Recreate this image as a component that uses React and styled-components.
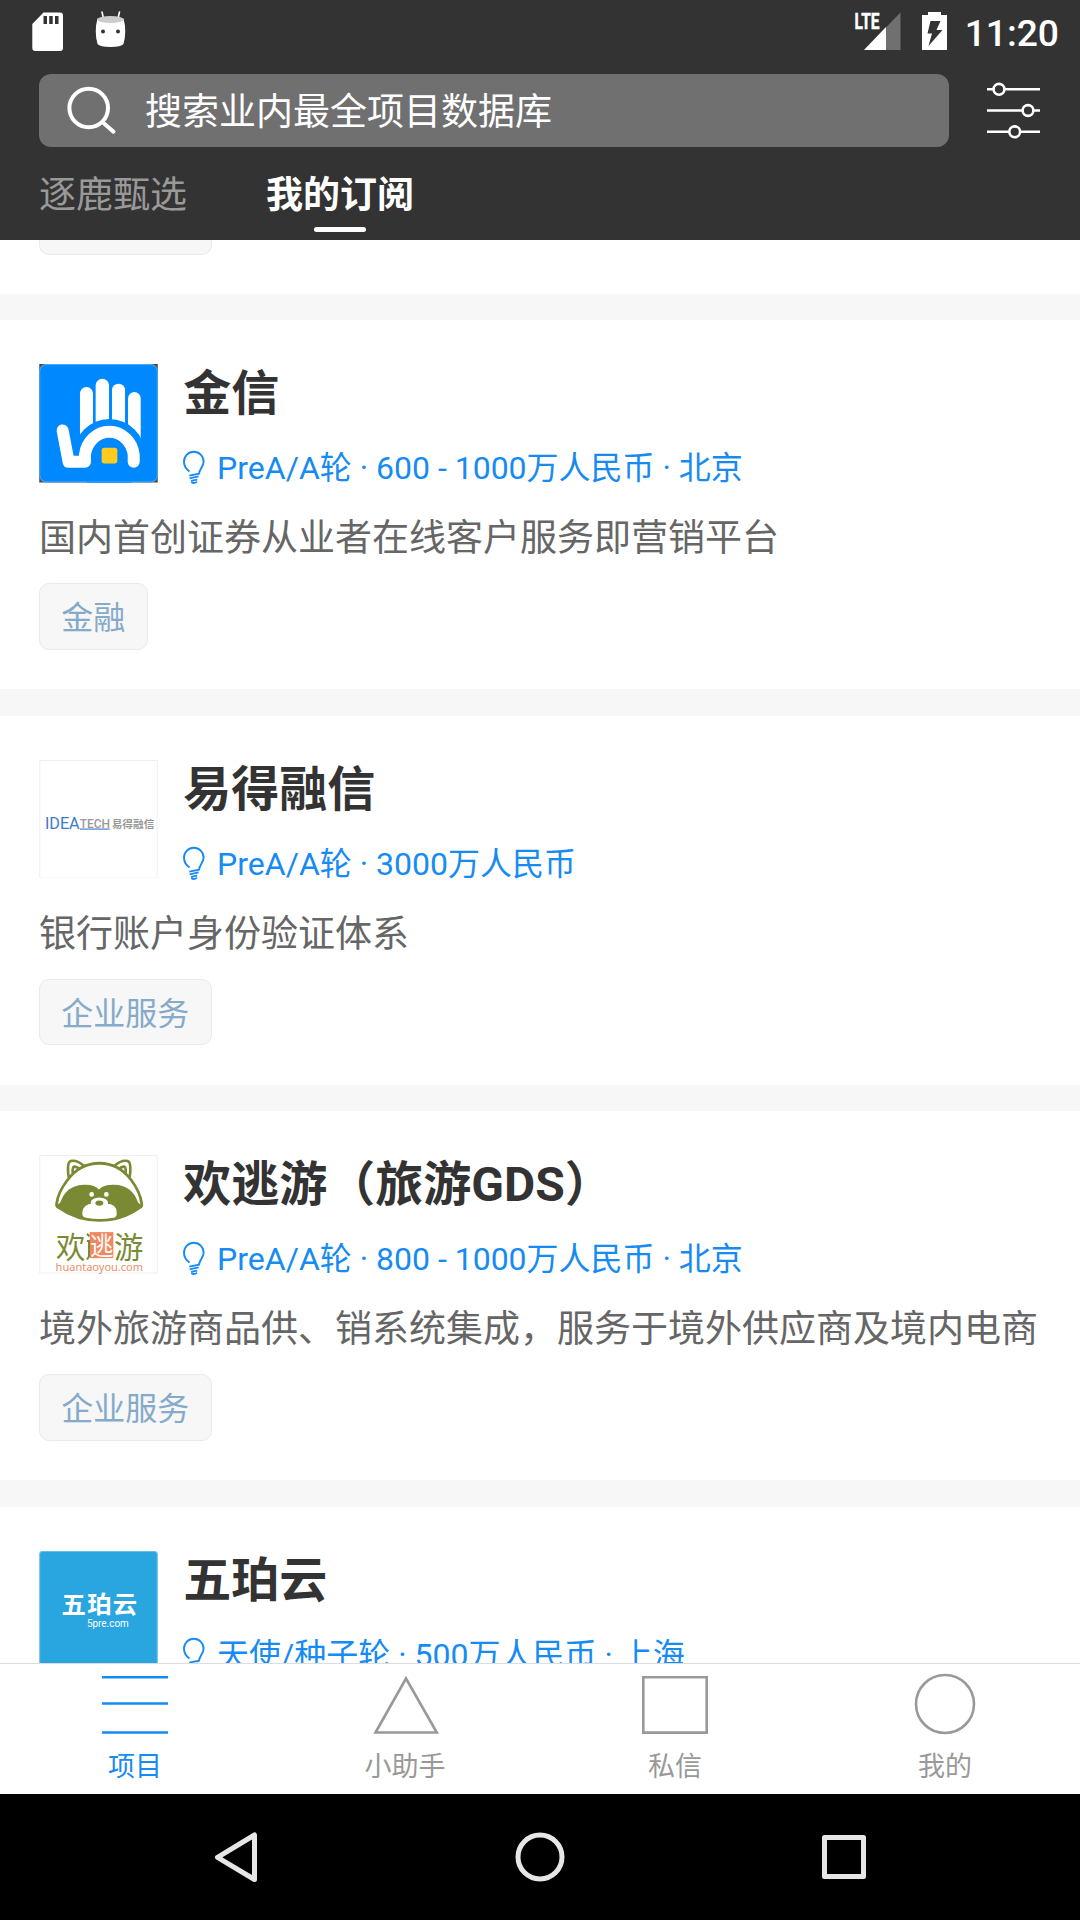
import React from "react";
import styled, { createGlobalStyle } from "styled-components";

const Global = createGlobalStyle`
  * { box-sizing: border-box; }
  body { margin: 0; background: #fff; }
  svg { display: block; flex: none; overflow: visible; }
`;

const Screen = styled.div`
  width: 1080px;
  height: 1920px;
  display: flex;
  flex-direction: column;
  overflow: hidden;
  background: #fff;
  font-family: Roboto, "Noto Sans CJK SC", sans-serif;
`;

const Header = styled.header`
  height: 240px;
  flex: none;
  background: #333;
  color: #fff;
`;

const StatusBar = styled.div`
  height: 73.5px;
  padding: 12px 21px 0 32px;
  display: flex;
  align-items: flex-start;
`;

const StatusGroup = styled.div`
  display: flex;
  gap: ${(p) => p.$gap}px;
  margin-left: ${(p) => (p.$end ? "auto" : "0")};
`;

const Clock = styled.span`
  font-size: 37.2px;
  line-height: 40px;
  padding-top: 1px;
  font-weight: 500;
  margin-left: -4px;
`;

const SearchRow = styled.div`
  display: flex;
  align-items: center;
  gap: 37.5px;
  padding: 0 39px;
`;

const SearchBox = styled.div`
  width: 910px;
  height: 73.5px;
  border-radius: 12px;
  background: #707070;
  display: flex;
  align-items: center;
  gap: 29px;
  padding-left: 27px;
  font-size: 37px;
  line-height: 48px;
`;

const SearchHint = styled.span`
  padding-top: 5px;
`;

const Tabs = styled.nav`
  display: flex;
  gap: 79px;
  padding: 25px 39px 0;
`;

const Tab = styled.div`
  display: flex;
  flex-direction: column;
  align-items: center;
  gap: 7px;
  font-size: 37px;
  line-height: 48px;
  color: ${(p) => (p.$active ? "#fff" : "#999")};
  font-weight: ${(p) => (p.$active ? 700 : 400)};
`;

const TabMark = styled.span`
  width: 52px;
  height: 5px;
  border-radius: 3px;
  background: #fff;
`;

const Feed = styled.main`
  flex: 1;
  min-height: 0;
  overflow: hidden;
`;

const PreviousCard = styled.div`
  height: 53.75px;
  padding-left: 39px;
`;

const TagEnd = styled.div`
  width: 173px;
  height: 15px;
  background: #f7f7f7;
  border: 1px solid #eaeaea;
  border-top: 0;
  border-radius: 0 0 10px 10px;
`;

const Divider = styled.div`
  height: 26.25px;
  background: #f7f7f7;
`;

const Card = styled.article`
  height: 369.25px;
  padding: 44px 39px 0;
`;

const CardTop = styled.div`
  display: flex;
  gap: 25.3px;
  height: 118.5px;
`;

const Logo = styled.div`
  width: 119px;
  height: 118.5px;
  flex: none;
  svg { width: 100%; height: 100%; overflow: hidden; }
`;

const Title = styled.h2`
  margin: 0;
  padding-top: 1px;
  font-size: 48px;
  line-height: 57px;
  font-weight: 700;
  color: #333;
  white-space: nowrap;
`;

const Meta = styled.div`
  display: flex;
  align-items: center;
  gap: 10.8px;
  margin-top: 27px;
  font-size: 32px;
  line-height: 38px;
  color: #178bf4;
  white-space: nowrap;
`;

const Description = styled.p`
  margin: 33.5px 0 21px;
  font-size: 37px;
  line-height: 46px;
  color: #666;
  white-space: nowrap;
`;

const Tag = styled.span`
  display: inline-flex;
  align-items: center;
  height: 66.5px;
  padding: 4px 21.3px 0;
  font-size: 32px;
  line-height: 38px;
  color: #86aaca;
  background: #f7f7f7;
  border: 1px solid #eaeaea;
  border-radius: 10px;
`;

const BottomBar = styled.nav`
  height: 131px;
  flex: none;
  border-top: 1px solid #ddd;
  display: grid;
  grid-template-columns: repeat(4, 1fr);
`;

const BottomItem = styled.div`
  display: flex;
  flex-direction: column;
  align-items: center;
  padding-top: 8px;
  gap: 5px;
  font-size: 27px;
  line-height: 36px;
  color: ${(p) => (p.$active ? "#178bf4" : "#999")};
`;

const SystemNav = styled.footer`
  height: 126px;
  flex: none;
  background: #000;
  display: flex;
  align-items: center;
  justify-content: space-between;
  padding: 0 210px;
`;

const SdIcon = () => (
  <svg width="31" height="40" viewBox="32 12 31 40">
    <path fill="#fff" fillRule="evenodd" d="M43.5 12.5H60a3 3 0 0 1 3 3V48a3 3 0 0 1-3 3H35.300a3 3 0 0 1-3-3V24ZM43.500 16v8h3.500v-8ZM49.200 16v8h3.500v-8ZM55 16v8h3.500v-8Z" />
  </svg>
);

const DroidIcon = () => (
  <svg width="32" height="40" viewBox="95 12 32 40">
    <path stroke="#fff" strokeWidth="1.600" strokeLinecap="round" d="M102 12l1.600 7M119.500 12l-1.600 7" />
    <path fill="#fff" d="M97.500 18.500Q94 31 97.500 44Q100 47 110.500 47T123.500 44Q127 31 123.500 18.500Z" />
    <ellipse cx="110.500" cy="19.500" rx="13" ry="3.600" fill="#ccc" />
    <circle cx="103" cy="31.500" r="2" fill="#333" />
    <circle cx="118" cy="31.500" r="2" fill="#333" />
  </svg>
);

const SignalIcon = () => (
  <svg width="46" height="40" viewBox="855 12 46 40">
    <path fill="#707070" d="M900.500 12.500V50H864Z" />
    <path fill="#fff" d="M886 27V50H864Z" />
    <text x="854.500" y="29" fontFamily="Roboto" fontSize="22.500" fontWeight="700" fill="#fff" stroke="#fff" strokeWidth="0.500" textLength="25" lengthAdjust="spacingAndGlyphs">LTE</text>
  </svg>
);

const BatteryIcon = () => (
  <svg width="26" height="40" viewBox="922 12 26 40">
    <path fill="#fff" d="M928 12H941V15H947V50H922V15H928Z" />
    <path fill="#333" d="M930.500 21H940.500L936.500 30H942.500L928.500 46L932 33.500H927.500Z" />
  </svg>
);

const SearchIcon = () => (
  <svg width="50" height="50" viewBox="66 85 50 50" fill="none" stroke="#fff" strokeWidth="4" strokeLinecap="round">
    <circle cx="88.700" cy="108" r="19.300" />
    <path d="M103 122.500L113.500 131.700" />
  </svg>
);

const FilterIcon = () => (
  <svg width="54" height="56" viewBox="986.500 82.500 54 56" stroke="#fff" strokeWidth="2.600" fill="#333">
    <path d="M986.500 89.800H1039.500M986.500 111H1039.500M986.500 132.300H1039.500" />
    <circle cx="998.500" cy="89.800" r="5.400" />
    <circle cx="1027.500" cy="111" r="5.400" />
    <circle cx="1014.200" cy="132.300" r="5.400" />
  </svg>
);

const BulbIcon = () => (
  <svg width="23" height="34" viewBox="0 0 23 34" fill="none" stroke="#178bf4" strokeWidth="1.900">
    <path d="M6.500 20.500Q1 16.500 1 10.700A9.800 10 0 0 1 20.600 10.700C20.600 15.500 16.600 18 16 22.600L6.300 24.600" />
    <path d="M15.600 25.400L6.600 27.400M14.200 28.600L8 29.900M8.300 31Q11 33.300 14 30.600" />
  </svg>
);

const HandLogo = () => (
  <svg viewBox="0 0 355 355">
    <rect width="355" height="355" fill="#4b4b4b" />
    <rect x="1.500" y="1.500" width="352" height="352" rx="20" fill="#0089fe" />
    <g fill="#fff">
      <rect x="122" y="69" width="39" height="180" rx="19" />
      <rect x="169" y="44" width="40" height="180" rx="20" />
      <rect x="218" y="59" width="39" height="180" rx="19" />
      <path d="M266 103a19 19 0 0 1 38 0V250H266Z" />
    </g>
    <circle cx="210" cy="272" r="107" fill="#0089fe" />
    <path d="M70 199L88 293H137V272A73.500 78 0 0 1 283 272V293" fill="none" stroke="#fff" strokeWidth="36" strokeLinecap="round" strokeLinejoin="round" />
    <rect x="187" y="251" width="47" height="47" rx="8" fill="#fdcb1e" />
    <rect x="1.500" y="1.500" width="352" height="352" rx="20" fill="none" stroke="#4da9f3" strokeWidth="3" />
  </svg>
);

const IdeatechLogo = () => (
  <svg viewBox="0 0 355 355">
    <rect x="1.500" y="1.500" width="352" height="352" fill="#fff" stroke="#efefef" strokeWidth="3" />
    <text x="17" y="208" fontFamily="Roboto" fontSize="47" fill="#3c7acb" textLength="104" lengthAdjust="spacingAndGlyphs">IDEA</text>
    <text x="121" y="203" fontFamily="Roboto" fontSize="38" fontWeight="500" fill="#999" textLength="91" lengthAdjust="spacingAndGlyphs">TECH</text>
    <path d="M122 207H211" stroke="#5b8ecf" strokeWidth="4" />
    <text x="217" y="204" fontFamily="Noto Sans CJK SC" fontSize="32" fontWeight="700" fill="#999">易得融信</text>
  </svg>
);

const RaccoonLogo = () => (
  <svg viewBox="0 0 355 355">
    <rect x="1.500" y="1.500" width="352" height="352" fill="#fff" stroke="#efefef" strokeWidth="3" />
    <g fill="#fff" stroke="#7a8a34" strokeWidth="8" strokeLinejoin="round">
      <path d="M88 66Q82 22 94 18Q114 14 134 33" />
      <path d="M271 66Q277 22 265 18Q245 14 225 33" />
      <path d="M101 58Q98 38 104 35Q112 34 120 42" />
      <path d="M258 58Q261 38 255 35Q247 34 239 42" />
    </g>
    <path fill="#7a8a34" d="M48 145Q52 112 80 74Q120 20 180 20T280 74Q307 112 311 145Q313 156 303 161Q250 200 180 200T56 161Q46 156 48 145Z" />
    <path fill="#fff" d="M56 148Q60 112 88 77Q124 29 180 29T272 77Q299 112 303 148L296 142Q278 90 224 89Q192 88 179 103Q166 88 135 89Q81 90 63 142Z" />
    <ellipse cx="180" cy="144" rx="26" ry="17" fill="#fff" />
    <path fill="#fff" d="M129 172Q132 146 160 146H202Q231 146 232 172Q233 187 222 188Q180 195 140 188Q128 186 129 172Z" />
    <ellipse cx="180" cy="144" rx="12" ry="8" fill="#7a8a34" />
    <circle cx="157" cy="118" r="7" fill="#fff" />
    <circle cx="201" cy="118" r="7" fill="#fff" />
    <rect x="151" y="231" width="71" height="78" fill="#f0875e" />
    <path d="M143 236L150 244M143 258H149V304L143 313" fill="none" stroke="#7a8a34" strokeWidth="6" />
    <g fontFamily="Noto Sans CJK SC" fontSize="88" fill="#7a8a34">
      <text x="50" y="309">欢</text>
      <text x="152" y="301" fontSize="76" fill="#fff" textLength="70" lengthAdjust="spacingAndGlyphs">逃</text>
      <text x="224" y="309">游</text>
    </g>
    <text x="49" y="349" fontFamily="Noto Sans" fontSize="34" fill="#e88f6a" textLength="262" lengthAdjust="spacingAndGlyphs">huantaoyou.com</text>
  </svg>
);

const WupoyunLogo = () => (
  <svg viewBox="0 0 355 355">
    <rect x="1.500" y="1.500" width="352" height="352" rx="8" fill="#29a6df" stroke="#62bfe6" strokeWidth="3" />
    <text x="67" y="185" fontFamily="Noto Sans CJK SC" fontSize="73" fontWeight="700" fill="#fff" textLength="226">五珀云</text>
    <text x="143" y="228" fontFamily="Roboto" fontSize="32" fill="#fff" textLength="125" lengthAdjust="spacingAndGlyphs">5pre.com</text>
  </svg>
);

const shapes = {
  lines: <path d="M22 13.200H88M22 39.500H88M22 68.500H88" />,
  triangle: <path d="M56 14.500L86.800 68.500H25.500Z" />,
  square: <path d="M23.300 13.300H86.700V68.600H23.300Z" />,
  circle: <circle cx="55" cy="40" r="29" />,
};

const ShapeIcon = ({ shape }) => (
  <svg width="110" height="72" viewBox="0 8 110 72" fill="none" stroke="currentColor" strokeWidth="2.600">
    {shapes[shape]}
  </svg>
);

const projects = [
  { logo: HandLogo, name: "金信", meta: "PreA/A轮 · 600 - 1000万人民币 · 北京", text: "国内首创证券从业者在线客户服务即营销平台", tag: "金融" },
  { logo: IdeatechLogo, name: "易得融信", meta: "PreA/A轮 · 3000万人民币", text: "银行账户身份验证体系", tag: "企业服务" },
  { logo: RaccoonLogo, name: "欢逃游（旅游GDS）", meta: "PreA/A轮 · 800 - 1000万人民币 · 北京", text: "境外旅游商品供、销系统集成，服务于境外供应商及境内电商", tag: "企业服务" },
  { logo: WupoyunLogo, name: "五珀云", meta: "天使/种子轮 · 500万人民币 · 上海" },
];

const sections = [
  { shape: "lines", label: "项目", active: true },
  { shape: "triangle", label: "小助手" },
  { shape: "square", label: "私信" },
  { shape: "circle", label: "我的" },
];

const Project = ({ logo: Mark, name, meta, text, tag }) => (
  <>
    <Divider />
    <Card>
      <CardTop>
        <Logo><Mark /></Logo>
        <div>
          <Title>{name}</Title>
          <Meta><BulbIcon />{meta}</Meta>
        </div>
      </CardTop>
      {text && <Description>{text}</Description>}
      {tag && <Tag>{tag}</Tag>}
    </Card>
  </>
);

export default function App() {
  return (
    <Screen lang="zh-CN">
      <Global />
      <Header>
        <StatusBar>
          <StatusGroup $gap={32}><SdIcon /><DroidIcon /></StatusGroup>
          <StatusGroup $gap={21} $end><SignalIcon /><BatteryIcon /><Clock>11:20</Clock></StatusGroup>
        </StatusBar>
        <SearchRow>
          <SearchBox><SearchIcon /><SearchHint>搜索业内最全项目数据库</SearchHint></SearchBox>
          <FilterIcon />
        </SearchRow>
        <Tabs>
          <Tab>逐鹿甄选</Tab>
          <Tab $active>我的订阅<TabMark /></Tab>
        </Tabs>
      </Header>
      <Feed>
        <PreviousCard><TagEnd /></PreviousCard>
        {projects.map((p) => <Project key={p.name} {...p} />)}
      </Feed>
      <BottomBar>
        {sections.map((s) => (
          <BottomItem key={s.shape} $active={s.active}>
            <ShapeIcon shape={s.shape} />
            {s.label}
          </BottomItem>
        ))}
      </BottomBar>
      <SystemNav>
        <svg width="54" height="54" viewBox="210 1830 54 54" fill="none" stroke="#e6e6e6" strokeWidth="5" strokeLinejoin="round">
          <path d="M217.500 1857.300L254.500 1835V1879.500Z" />
        </svg>
        <svg width="54" height="54" viewBox="0 0 54 54" fill="none" stroke="#e6e6e6" strokeWidth="5">
          <circle cx="27" cy="27" r="22" />
        </svg>
        <svg width="54" height="54" viewBox="816 1830 54 54" fill="none" stroke="#e6e6e6" strokeWidth="5" strokeLinejoin="round">
          <rect x="824.500" y="1837.500" width="39" height="39" />
        </svg>
      </SystemNav>
    </Screen>
  );
}
